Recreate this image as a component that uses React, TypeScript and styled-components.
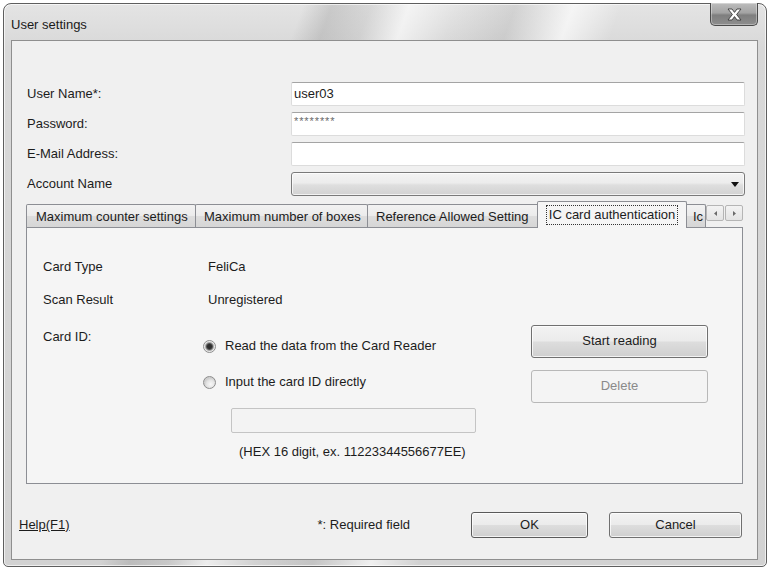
import styled, { createGlobalStyle } from 'styled-components';

const GlobalStyle = createGlobalStyle`
	* {
		box-sizing: border-box;
	}
	html,
	body {
		margin: 0;
		padding: 0;
		background: #ffffff;
	}
	body {
		font-family: 'Liberation Sans', Arial, sans-serif;
		font-size: 13px;
		color: #1c1c1c;
	}
`;

const tabs = [
	{ label: 'Maximum counter settings', width: 170 },
	{ label: 'Maximum number of boxes', width: 173 },
	{ label: 'Reference Allowed Setting', width: 173 },
	{ label: 'IC card authentication', width: 150, active: true },
	{ label: 'Ic', width: 22 },
];

export default function App(): JSX.Element {
	return (
		<>
			<GlobalStyle />
			<Window>
				<TitleBar>
					<Title>User settings</Title>
					<CloseButton type="button" aria-label="Close">
						<svg width="15" height="13" viewBox="0 0 15 13">
							<path
								d="M1 1h4L7.5 4.4 10 1h4L9.6 6.5 14 12h-4L7.5 8.6 5 12H1l4.4-5.5z"
								fill="#ffffff"
								stroke="#3a3a3a"
								strokeWidth="0.9"
								strokeLinejoin="round"
							/>
						</svg>
					</CloseButton>
				</TitleBar>

				<Client>
					<FormGrid>
						<FieldLabel>User Name*:</FieldLabel>
						<TextBox>user03</TextBox>
						<FieldLabel>Password:</FieldLabel>
						<TextBox $masked>********</TextBox>
						<FieldLabel>E-Mail Address:</FieldLabel>
						<TextBox />
						<FieldLabel>Account Name</FieldLabel>
						<ComboBox>
							<svg width="8" height="5" viewBox="0 0 8 5">
								<path d="M0 0h8L4 5z" fill="#111111" />
							</svg>
						</ComboBox>
					</FormGrid>

					<TabRow>
						<TabList>
							{tabs.map((t) => (
								<Tab key={t.label} $width={t.width} $active={!!t.active}>
									{t.active ? <FocusRing>{t.label}</FocusRing> : t.label}
								</Tab>
							))}
						</TabList>
						<Scroller>
							<ScrollButton type="button" aria-label="Previous tab">
								<svg width="3" height="5" viewBox="0 0 3 5">
									<path d="M3 0v5L0 2.5z" fill="#6a6a6a" />
								</svg>
							</ScrollButton>
							<ScrollButton type="button" aria-label="Next tab">
								<svg width="3" height="5" viewBox="0 0 3 5">
									<path d="M0 0v5l3-2.5z" fill="#6a6a6a" />
								</svg>
							</ScrollButton>
						</Scroller>
					</TabRow>

					<TabPanel>
						<InfoRow>
							<InfoLabel>Card Type</InfoLabel>
							<span>FeliCa</span>
						</InfoRow>
						<InfoRow>
							<InfoLabel>Scan Result</InfoLabel>
							<span>Unregistered</span>
						</InfoRow>

						<CardSection>
							<CardLabel>Card ID:</CardLabel>
							<ChoiceColumn>
								<RadioRow $top={13}>
									<RadioDot $checked />
									Read the data from the Card Reader
								</RadioRow>
								<RadioRow $top={20}>
									<RadioDot />
									Input the card ID directly
								</RadioRow>
								<CardInput />
								<Hint>(HEX 16 digit, ex. 11223344556677EE)</Hint>
							</ChoiceColumn>
							<ButtonColumn>
								<PushButton type="button" $height={33}>
									Start reading
								</PushButton>
								<PushButton type="button" $height={33} disabled>
									Delete
								</PushButton>
							</ButtonColumn>
						</CardSection>
					</TabPanel>

					<Footer>
						<HelpLink>Help(F1)</HelpLink>
						<FooterActions>
							<Note>*: Required field</Note>
							<PushButton type="button" $width={117} $height={26} $default>
								OK
							</PushButton>
							<PushButton type="button" $width={133} $height={26}>
								Cancel
							</PushButton>
						</FooterActions>
					</Footer>
				</Client>
			</Window>
		</>
	);
}

const Window = styled.div`
	margin: 3px 3px 0 3px;
	width: 764px;
	height: 564px;
	display: flex;
	flex-direction: column;
	padding: 0 8px 6px 7px;
	border: 1px solid #5e5e5e;
	border-radius: 8px 8px 5px 5px;
	box-shadow: inset 0 0 0 1px rgba(255, 255, 255, 0.65);
	background:
		linear-gradient(
			110deg,
			rgba(255, 255, 255, 0) 0%,
			rgba(255, 255, 255, 0) 31%,
			rgba(110, 110, 110, 0.22) 34%,
			rgba(110, 110, 110, 0.1) 38%,
			rgba(255, 255, 255, 0.6) 42%,
			rgba(255, 255, 255, 0) 47%,
			rgba(110, 110, 110, 0.14) 53%,
			rgba(255, 255, 255, 0.65) 59%,
			rgba(255, 255, 255, 0) 64%
		),
		linear-gradient(180deg, #e4e4e4 0%, #d8d8d8 8%, #d2d2d2 100%);
`;

const TitleBar = styled.div`
	height: 36px;
	flex: 0 0 36px;
	display: flex;
	justify-content: space-between;
	align-items: flex-start;
`;

const Title = styled.div`
	margin-top: 13px;
	font-size: 13px;
	line-height: 15px;
	color: #1a1a1a;
`;

const CloseButton = styled.button`
	width: 48px;
	height: 23px;
	margin: -1px 0 0 0;
	padding: 0;
	display: flex;
	align-items: center;
	justify-content: center;
	border: 1px solid #4a4a4a;
	border-top: none;
	border-radius: 0 0 5px 5px;
	background: linear-gradient(180deg, #bdbdbd 0%, #a3a3a3 45%, #7e7e7e 55%, #8e8e8e 100%);
	box-shadow: inset 0 0 0 1px rgba(255, 255, 255, 0.35);
`;

const Client = styled.div`
	flex: 1;
	display: flex;
	flex-direction: column;
	border: 1px solid #8f8f8f;
	background: #f0f0f0;
`;

const FormGrid = styled.div`
	display: grid;
	grid-template-columns: 264px 454px;
	grid-auto-rows: 24px;
	row-gap: 6px;
	padding: 41px 0 0 15px;
`;

const FieldLabel = styled.div`
	display: flex;
	align-items: center;
	line-height: 16px;
`;

const TextBox = styled.div<{ $masked?: boolean }>`
	padding: ${(p) => (p.$masked ? '3px 0 0 2px' : '0 0 0 2px')};
	display: flex;
	align-items: ${(p) => (p.$masked ? 'flex-start' : 'center')};
	background: #ffffff;
	border: 1px solid #dcdcdc;
	border-top-color: #a4a4a4;
	border-radius: 2px;
	font-size: ${(p) => (p.$masked ? '11px' : '13px')};
	line-height: ${(p) => (p.$masked ? '11px' : '16px')};
	letter-spacing: ${(p) => (p.$masked ? '0.9px' : '0')};
	color: ${(p) => (p.$masked ? '#6a6a6a' : '#1c1c1c')};
`;

const ComboBox = styled.div`
	display: flex;
	align-items: center;
	justify-content: flex-end;
	padding-right: 5px;
	border: 1px solid #7a7a7a;
	border-radius: 3px;
	background: linear-gradient(180deg, #f4f4f4 0%, #ececec 45%, #dedede 55%, #d2d2d2 100%);
	box-shadow: inset 0 0 0 1px rgba(255, 255, 255, 0.7);
`;

const TabRow = styled.div`
	position: relative;
	z-index: 1;
	width: 717px;
	height: 28px;
	margin: 4px 0 -1px 14px;
	display: flex;
`;

const TabList = styled.div`
	flex: 0 0 682px;
	height: 28px;
	display: flex;
	align-items: flex-end;
	overflow: hidden;
`;

const Tab = styled.div<{ $width: number; $active: boolean }>`
	position: relative;
	flex: 0 0 ${(p) => p.$width}px;
	height: ${(p) => (p.$active ? 27 : 23)}px;
	margin: ${(p) => (p.$active ? '0 -2px 0 -3px' : '0 0 1px -1px')};
	z-index: ${(p) => (p.$active ? 1 : 0)};
	display: flex;
	align-items: ${(p) => (p.$active ? 'flex-start' : 'center')};
	justify-content: ${(p) => (p.$active ? 'center' : 'flex-start')};
	padding: ${(p) => (p.$active ? '3px 0 0' : '0 0 0 8px')};
	white-space: nowrap;
	border: 1px solid #8c8e94;
	border-bottom: none;
	border-radius: 2px 2px 0 0;
	background: ${(p) =>
		p.$active ? '#f5f5f5' : 'linear-gradient(180deg, #f2f2f2 0%, #ebebeb 50%, #dddddd 51%, #d6d6d6 100%)'};
	&:first-child {
		margin-left: 0;
		padding-left: 9px;
	}
`;

const FocusRing = styled.span`
	padding: 1px 2px;
	border: 1px dotted #333333;
	line-height: 16px;
`;

const Scroller = styled.div`
	position: absolute;
	right: 0;
	top: 5px;
	display: flex;
	gap: 1px;
`;

const ScrollButton = styled.button`
	width: 18px;
	height: 16px;
	padding: 0;
	display: flex;
	align-items: center;
	justify-content: center;
	border: 1px solid #b5b5b5;
	border-radius: 2px;
	background: linear-gradient(180deg, #f3f3f3 0%, #e4e4e4 100%);
`;

const TabPanel = styled.div`
	width: 717px;
	height: 257px;
	margin-left: 14px;
	padding: 31px 0 0 16px;
	border: 1px solid #8c8e94;
	background: #f5f5f5;
`;

const InfoRow = styled.div`
	display: flex;
	line-height: 16px;
	margin-bottom: 17px;
`;

const InfoLabel = styled.span`
	width: 165px;
`;

const CardSection = styled.div`
	display: grid;
	grid-template-columns: 159px 329px 177px;
	margin-top: 1px;
`;

const CardLabel = styled.div`
	padding-top: 4px;
	line-height: 16px;
`;

const ChoiceColumn = styled.div`
	display: flex;
	flex-direction: column;
	align-items: flex-start;
`;

const RadioRow = styled.label<{ $top: number }>`
	margin-top: ${(p) => p.$top}px;
	display: flex;
	align-items: center;
	gap: 9px;
	line-height: 16px;
`;

const RadioDot = styled.span<{ $checked?: boolean }>`
	width: 13px;
	height: 13px;
	margin-left: 1px;
	border-radius: 50%;
	border: 1px solid #8d8d8d;
	background: ${(p) =>
		p.$checked
			? 'radial-gradient(circle, #2e2e2e 0 2px, #555555 3px, #a9a9a9 4px, #e9e9e9 5px, #f4f4f4 6px)'
			: 'radial-gradient(circle at 60% 65%, #f8f8f8 0, #e4e4e4 4px, #cfcfcf 6px)'};
`;

const CardInput = styled.div`
	width: 245px;
	height: 25px;
	margin: 18px 0 0 29px;
	border: 1px solid #c4c4c4;
	border-radius: 2px;
	background: #f3f3f3;
`;

const Hint = styled.div`
	margin: 11px 0 0 37px;
	line-height: 16px;
`;

const ButtonColumn = styled.div`
	display: flex;
	flex-direction: column;
	gap: 12px;
`;

const PushButton = styled.button<{ $width?: number; $height: number; $default?: boolean }>`
	width: ${(p) => (p.$width ? `${p.$width}px` : '100%')};
	height: ${(p) => p.$height}px;
	padding: 0 0 2px;
	font-family: inherit;
	font-size: 13px;
	color: #1c1c1c;
	border: 1px solid ${(p) => (p.$default ? '#5a5a5a' : '#707070')};
	border-radius: 3px;
	background: linear-gradient(180deg, #f3f3f3 0%, #ebebeb 48%, #dddddd 52%, #cfcfcf 100%);
	box-shadow: inset 0 0 0 1px rgba(255, 255, 255, 0.75);

	&:disabled {
		color: #8a8a8a;
		border-color: #b8b8b8;
		background: #f4f4f4;
		box-shadow: none;
	}
`;

const Footer = styled.div`
	margin-top: 28px;
	display: flex;
	align-items: center;
	padding: 0 15px 0 7px;
`;

const HelpLink = styled.a`
	text-decoration: underline;
	color: #1c1c1c;
	line-height: 16px;
`;

const FooterActions = styled.div`
	margin-left: auto;
	display: flex;
	align-items: center;
	gap: 21px;
`;

const Note = styled.span`
	margin-right: 40px;
	line-height: 16px;
`;
